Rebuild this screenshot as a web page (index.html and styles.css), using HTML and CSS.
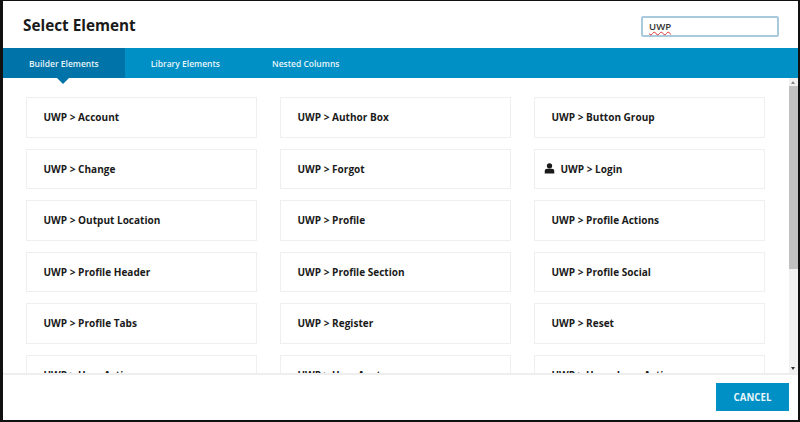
FILE: index.html
```html
<!DOCTYPE html>
<html lang="en">
<head>
<meta charset="utf-8">
<title>Select Element</title>
<link rel="stylesheet" href="styles.css">
</head>
<body>
<div class="modal">
  <header class="head">
    <h1 class="title">Select Element</h1>
    <div class="search"><span class="search-text">UWP</span></div>
  </header>
  <nav class="tabs">
    <a class="tab active">Builder Elements</a>
    <a class="tab">Library Elements</a>
    <a class="tab">Nested Columns</a>
  </nav>
  <div class="body">
    <div class="grid">
      <div class="card">UWP &gt; Account</div>
      <div class="card">UWP &gt; Author Box</div>
      <div class="card">UWP &gt; Button Group</div>
      <div class="card">UWP &gt; Change</div>
      <div class="card">UWP &gt; Forgot</div>
      <div class="card with-icon"><svg class="icon" viewBox="0 0 12 12"><circle cx="6" cy="3.1" r="2.9"/><path d="M0.8 11.5V8.6C0.8 7.2 2 6.2 3.6 6.2H8.4C10 6.2 11.2 7.2 11.2 8.6V11.5Z"/></svg>UWP &gt; Login</div>
      <div class="card">UWP &gt; Output Location</div>
      <div class="card">UWP &gt; Profile</div>
      <div class="card">UWP &gt; Profile Actions</div>
      <div class="card">UWP &gt; Profile Header</div>
      <div class="card">UWP &gt; Profile Section</div>
      <div class="card">UWP &gt; Profile Social</div>
      <div class="card">UWP &gt; Profile Tabs</div>
      <div class="card">UWP &gt; Register</div>
      <div class="card">UWP &gt; Reset</div>
      <div class="card">UWP &gt; User Actions</div>
      <div class="card">UWP &gt; User Avatar</div>
      <div class="card">UWP &gt; Users Loop Actions</div>
    </div>
    <div class="scrollbar">
      <span class="arrow up"></span>
      <span class="track"><span class="thumb"></span></span>
      <span class="arrow down"></span>
    </div>
  </div>
  <footer class="foot"><button class="cancel">CANCEL</button></footer>
</div>
</body>
</html>
```
FILE: styles.css
```css
* { box-sizing: border-box; }
html, body { margin: 0; height: 100%; }
body {
  width: 800px;
  height: 422px;
  overflow: hidden;
  background: #111;
  padding: 1px 2px 2px 3px;
  font-family: "Open Sans", "Liberation Sans", sans-serif;
  color: #111;
}
.modal {
  width: 100%;
  height: 100%;
  background: #fff;
  display: flex;
  flex-direction: column;
}
.head {
  height: 47px;
  flex: none;
  display: flex;
  align-items: center;
  justify-content: space-between;
  padding: 0 19px 0 20px;
}
.title { margin: 0; font-size: 15.3px; font-weight: 700; line-height: 22px; color: #1a1a1a; }
.search {
  width: 138px;
  height: 21px;
  margin-top: 4px;
  border: 2px solid #a9c9dd;
  border-radius: 2px;
  padding-left: 6px;
  font-size: 9.6px;
  font-weight: 600;
  line-height: 17px;
  color: #333;
}
.search-text { text-decoration: underline wavy #d33 0.7px; text-underline-offset: 1px; }
.tabs {
  height: 29.5px;
  flex: none;
  display: flex;
  background: #0090c5;
  color: #e6f5fb;
  font-size: 8.5px;
  font-weight: 600;
}
.tab { display: flex; align-items: center; padding: 1px 26px 0; position: relative; }
.tab.active { background: #0073a8; }
.tab.active::after {
  content: "";
  position: absolute;
  left: 50%;
  bottom: -6px;
  margin-left: -7px;
  border-left: 6.5px solid transparent;
  border-right: 6.5px solid transparent;
  border-top: 6px solid #0073a8;
}
.body { flex: 1; min-height: 0; display: flex; overflow: hidden; padding-top: 19.5px; border-bottom: 2px solid #eee; position: relative; }
.grid {
  width: 740px;
  margin-left: 23px;
  display: grid;
  grid-template-columns: repeat(3, 231px);
  column-gap: 23px;
  grid-auto-rows: 40.5px;
  row-gap: 11px;
  flex: none;
}
.card {
  border: 1px solid #efefef;
  display: flex;
  align-items: center;
  padding-left: 16.5px;
  font-size: 10.05px;
  font-weight: 700;
  color: #1a1a1a;
}
.card.with-icon { padding-left: 8.5px; }
.icon { width: 11px; height: 11px; margin-right: 6px; fill: #1a1a1a; }
.scrollbar {
  position: absolute;
  right: 0;
  top: 0;
  bottom: 0;
  width: 9px;
  background: #f1f1f1;
  display: flex;
  flex-direction: column;
}
.arrow { height: 8px; flex: none; position: relative; }
.arrow::after { content: ""; position: absolute; left: 2px; border-left: 2.5px solid transparent; border-right: 2.5px solid transparent; }
.arrow.up::after { top: 3px; border-bottom: 3px solid #888; }
.arrow.down::after { top: 2px; border-top: 3px solid #333; }
.track { flex: 1; display: block; }
.thumb { display: block; height: 183px; background: #c1c1c1; }
.foot {
  height: 45px;
  flex: none;
  display: flex;
  align-items: flex-start;
  justify-content: flex-end;
  padding: 8px 9px 0 0;
}
.cancel {
  width: 73px;
  height: 28px;
  border: 0;
  background: #0090c5;
  color: #e8f6fb;
  font: 700 9.7px "Open Sans", "Liberation Sans", sans-serif;
}
```
